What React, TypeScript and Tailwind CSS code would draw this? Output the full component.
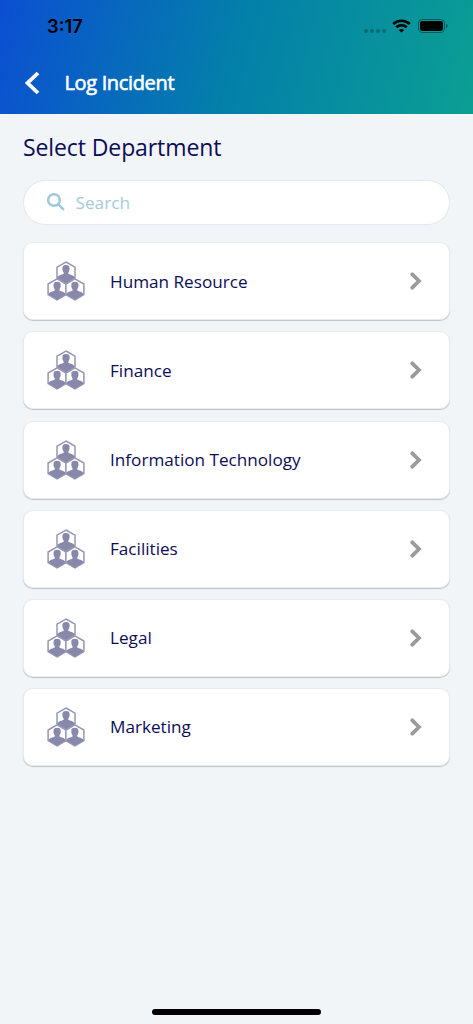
import React from "react";

const departments = [
  "Human Resource",
  "Finance",
  "Information Technology",
  "Facilities",
  "Legal",
  "Marketing",
];

// one hexagon with a person inside
const HexPerson = ({ x, y }: { x: number; y: number }) => (
  <g transform={`translate(${x} ${y})`}>
    <path
      d="M9.7 0.9 L18.7 6 V16.6 L9.7 21.8 L0.7 16.6 V6 Z"
      fill="#fff"
      stroke="#9696b5"
      strokeWidth="1.5"
    />
    <path
      d="M9.7 3.8 C12.5 3.8 13.5 5.4 13.3 7.8 C13.2 9.6 12.6 10.6 12 11.4 V12.6 C13.6 13.6 17.4 13.6 18.4 16.6 L9.7 21.8 L1 16.6 C2 13.6 5.8 13.6 7.4 12.6 V11.4 C6.8 10.6 6.2 9.6 6.1 7.8 C5.9 5.4 6.9 3.8 9.7 3.8 Z"
      fill="#8888ab"
    />
  </g>
);

const DepartmentIcon = () => (
  <svg width="38" height="40" viewBox="0 0 38 40" className="shrink-0">
    <HexPerson x={9.3} y={0.1} />
    <HexPerson x={0.4} y={17} />
    <HexPerson x={18.2} y={17} />
  </svg>
);

const StatusBar = () => (
  <div className="flex h-[52px] items-center justify-between pl-[47px] pr-[25px]">
    <p className="mt-px font-['Inter'] text-[18.3px] font-semibold text-black">
      3:17
    </p>
    <div className="flex items-center">
      <div className="mr-[6px] mt-[9px] flex gap-[2px]">
        <span className="size-[4px] rounded-full bg-black/25" />
        <span className="size-[4px] rounded-full bg-black/25" />
        <span className="size-[4px] rounded-full bg-black/25" />
        <span className="size-[4px] rounded-full bg-black/25" />
      </div>
      <svg width="19" height="14" viewBox="0 0 19 14" className="mr-[7px]">
        <g fill="none" stroke="#000" strokeWidth="2.6">
          <path d="M1.2 5 C5.8 0.6 13.2 0.6 17.8 5" />
          <path d="M4.3 8.3 C7.2 5.6 11.8 5.6 14.7 8.3" />
        </g>
        <path d="M9.5 13.6 L6.8 10.9 C8.4 9.6 10.6 9.6 12.2 10.9 Z" />
      </svg>
      <svg width="30" height="14" viewBox="0 0 30 14">
        <rect
          x="0.5"
          y="0.5"
          width="26"
          height="13"
          rx="3.8"
          fill="none"
          stroke="#000"
          strokeOpacity="0.4"
        />
        <rect x="2" y="2" width="23" height="10" rx="2.4" />
        <path d="M28 4.8 C30.2 5.6 30.2 8.4 28 9.2 Z" fillOpacity="0.45" />
      </svg>
    </div>
  </div>
);

const App = () => {
  return (
    <div className="flex h-[1024px] w-[473px] flex-col overflow-hidden bg-[#f1f5f8] font-['Open_Sans',sans-serif] text-[#0d0d56]">
      <header className="h-[114.4px] shrink-0 bg-[linear-gradient(105deg,#0c4fd2_0%,#0480a9_50%,#0b9f93_100%)]">
        <StatusBar />
        <div className="flex h-[62px] items-center pl-[25px]">
          <svg width="15" height="24" viewBox="0 0 15 24">
            <path
              d="M13 2 L2.6 12 L13 22"
              fill="none"
              stroke="#fff"
              strokeWidth="3.8"
            />
          </svg>
          <h1 className="ml-[24.5px] whitespace-nowrap text-[20px] tracking-[-0.35px] text-white [-webkit-text-stroke:0.6px_white]">
            Log Incident
          </h1>
        </div>
      </header>

      <main className="flex flex-1 flex-col px-[23px]">
        <h2 className="mt-[15.6px] whitespace-nowrap text-[23px] leading-[34px] tracking-[-0.1px]">
          Select Department
        </h2>
        <div className="mt-[16px] flex h-[45px] shrink-0 items-center rounded-full border border-[#e3e7f1] bg-white pl-[23px]">
          <svg width="18" height="18" viewBox="0 0 18 18">
            <g fill="none" stroke="#9fc8de" strokeWidth="2.5">
              <circle cx="7" cy="7" r="5.8" />
              <path d="M11.2 11.2 L16.2 16.2" strokeLinecap="round" />
            </g>
          </svg>
          <p className="ml-[10.5px] mt-px text-[17.2px] text-[#a3cbe0]">
            Search
          </p>
        </div>

        <div className="mt-[17.4px] flex flex-col gap-[11.1px]">
          {departments.map((name) => (
            <div
              key={name}
              className="flex h-[78px] items-center rounded-[10px] border border-[#e8ebf3] bg-white pl-[23px] pr-[27.5px] shadow-[0px_1px_1px_rgba(0,0,0,0.2)]"
            >
              <DepartmentIcon />
              <p className="ml-[25px] mt-px flex-1 whitespace-nowrap text-[17.15px]">
                {name}
              </p>
              <svg width="12" height="18" viewBox="0 0 12 18">
                <path
                  d="M2.3 2.3 L9 9 L2.3 15.7"
                  fill="none"
                  stroke="#9b9b9b"
                  strokeWidth="3.8"
                  strokeLinecap="round"
                />
              </svg>
            </div>
          ))}
        </div>
      </main>

      {/* home indicator */}
      <div className="mx-auto mb-[9px] h-[6px] w-[169px] shrink-0 rounded-full bg-black" />
    </div>
  );
};

export default App;
